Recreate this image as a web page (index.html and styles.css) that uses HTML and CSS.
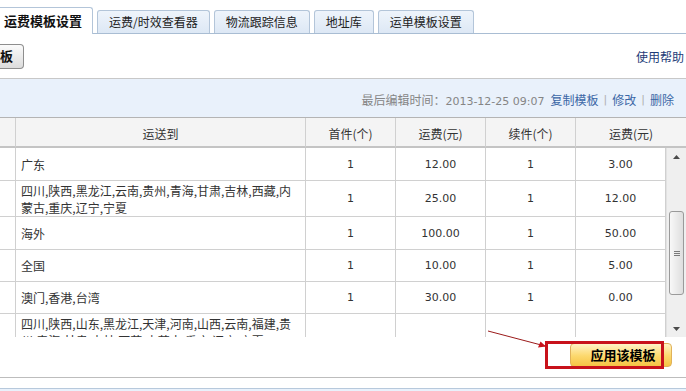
FILE: index.html
```html
<!DOCTYPE html>
<html lang="zh-CN">
<head>
<meta charset="utf-8">
<title>运费模板设置</title>
<link rel="stylesheet" href="styles.css">
</head>
<body>
<div class="page">
  <ul class="tabs">
    <li class="tab active">运费模板设置</li>
    <li class="tab">运费/时效查看器</li>
    <li class="tab">物流跟踪信息</li>
    <li class="tab">地址库</li>
    <li class="tab">运单模板设置</li>
  </ul>

  <div class="toolbar">
    <button class="btn-cut">板</button>
    <a class="help">使用帮助</a>
  </div>

  <div class="panel">
    <div class="panel-head">
      <span class="meta">最后编辑时间：<span class="num">2013-12-25 09:07</span></span>
      <a class="link">复制模板</a><span class="sep">|</span><a class="link">修改</a><span class="sep">|</span><a class="link">删除</a>
    </div>

    <table class="grid-head">
      <colgroup>
        <col class="c-idx"><col class="c-dest"><col class="c-n"><col class="c-n"><col class="c-n"><col class="c-last">
      </colgroup>
      <tr>
        <th></th><th>运送到</th><th>首件(个)</th><th>运费(元)</th><th>续件(个)</th><th>运费(元)</th>
      </tr>
    </table>

    <div class="grid-body">
      <div class="scroll-view">
        <table class="grid">
          <colgroup>
            <col class="c-idx"><col class="c-dest"><col class="c-n"><col class="c-n"><col class="c-n"><col class="c-n2">
          </colgroup>
          <tr class="r33">
            <td></td><td class="dest">广东</td><td class="num">1</td><td class="num">12.00</td><td class="num">1</td><td class="num">3.00</td>
          </tr>
          <tr class="r36">
            <td></td><td class="dest">四川,陕西,黑龙江,云南,贵州,青海,甘肃,吉林,西藏,内<br>蒙古,重庆,辽宁,宁夏</td><td class="num">1</td><td class="num">25.00</td><td class="num">1</td><td class="num">12.00</td>
          </tr>
          <tr class="r33">
            <td></td><td class="dest">海外</td><td class="num">1</td><td class="num">100.00</td><td class="num">1</td><td class="num">50.00</td>
          </tr>
          <tr class="r32">
            <td></td><td class="dest">全国</td><td class="num">1</td><td class="num">10.00</td><td class="num">1</td><td class="num">5.00</td>
          </tr>
          <tr class="r32">
            <td></td><td class="dest">澳门,香港,台湾</td><td class="num">1</td><td class="num">30.00</td><td class="num">1</td><td class="num">0.00</td>
          </tr>
          <tr class="r36 top">
            <td></td><td class="dest">四川,陕西,山东,黑龙江,天津,河南,山西,云南,福建,贵<br>州,青海,甘肃,吉林,西藏,内蒙古,重庆,辽宁,宁夏</td><td class="num"></td><td class="num"></td><td class="num"></td><td class="num"></td>
          </tr>
        </table>
      </div>
      <div class="scrollbar">
        <div class="sb-btn">
          <svg width="7" height="4" viewBox="0 0 7 4"><path d="M0 4 L3.5 0 L7 4 Z" fill="#4a4a4a"/></svg>
        </div>
        <div class="sb-track">
          <div class="sb-thumb">
            <svg width="6" height="5" viewBox="0 0 6 5"><path d="M0 0.5 H6 M0 2.5 H6 M0 4.5 H6" stroke="#7a7a7a" stroke-width="1"/></svg>
          </div>
        </div>
        <div class="sb-btn">
          <svg width="7" height="4" viewBox="0 0 7 4"><path d="M0 0 L3.5 4 L7 0 Z" fill="#4a4a4a"/></svg>
        </div>
      </div>
    </div>

    <div class="panel-foot">
      <button class="apply">应用该模板</button>
    </div>
  </div>

  <div class="next-panel"></div>

  <div class="annot-box"></div>
  <svg class="annot-arrow" width="70" height="30" viewBox="0 0 70 30">
    <line x1="3" y1="6" x2="60" y2="21" stroke="#9b1b1b" stroke-width="1"/>
    <path d="M61 21.5 L53 22.5 L55.5 16.5 Z" fill="#c8121b"/>
  </svg>
</div>
</body>
</html>
```

FILE: styles.css
```css
* {
  box-sizing: border-box;
  margin: 0;
  padding: 0;
}

html,
body {
  width: 686px;
  height: 391px;
  overflow: hidden;
  background: #fff;
}

body {
  font-family: "Noto Sans CJK SC", "DejaVu Sans", sans-serif;
  font-size: 12px;
  color: #333;
}

.page {
  position: relative;
  width: 686px;
}

/* Tabs */
.tabs {
  list-style: none;
  display: flex;
  align-items: flex-end;
  gap: 4px;
  height: 34px;
  border-bottom: 1px solid #a9bdd3;
}

.tab {
  height: 23px;
  line-height: 21px;
  padding: 0 11px;
  border: 1px solid #b3c5d9;
  border-bottom: none;
  border-radius: 3px 3px 0 0;
  background: linear-gradient(#eef4fb, #dde8f5);
  color: #222;
  white-space: nowrap;
}

.tab.active {
  height: 27px;
  line-height: 26px;
  margin-bottom: -1px;
  padding: 0 10px 0 4px;
  border-left: none;
  border-radius: 0 3px 0 0;
  background: #fff;
  font-size: 13px;
  font-weight: bold;
  color: #111;
}

/* Toolbar */
.toolbar {
  display: flex;
  justify-content: space-between;
  align-items: center;
  height: 44px;
  padding-right: 2px;
}

.btn-cut {
  width: 24px;
  height: 25px;
  border: 1px solid #8e8e8e;
  border-left: none;
  border-radius: 0 4px 4px 0;
  background: linear-gradient(#fbfbfb, #dcdcdc);
  font-family: "Noto Sans CJK SC", sans-serif;
  font-size: 13px;
  font-weight: bold;
  color: #111;
  text-align: left;
  line-height: 22px;
}

.help {
  color: #1e3c78;
  font-size: 12px;
}

/* Panel */
.panel {
  border-top: 1px solid #c8c8c8;
}

.panel-head {
  display: flex;
  justify-content: flex-end;
  align-items: center;
  height: 38px;
  padding: 3px 12px 0 0;
  background: #e9f1fb;
}

.meta {
  color: #858585;
  margin-right: 6px;
}

.num {
  font-family: "DejaVu Sans", sans-serif;
  font-size: 11px;
}

.link {
  color: #3b67a6;
}

.sep {
  color: #b0b0b0;
  margin: 0 5px;
  font-family: "DejaVu Sans", sans-serif;
  font-size: 11px;
}

/* Grid */
.c-idx { width: 15px; }
.c-dest { width: 290px; }
.c-n { width: 90px; }
.c-n2 { width: 91px; }
.c-last { width: 111px; }

.grid-head {
  width: 686px;
  table-layout: fixed;
  border-collapse: separate;
  border-spacing: 0;
  border-top: 1px solid #b4b4b4;
  background: #f4f4f4;
}

.grid-head th {
  height: 30px;
  padding-top: 3px;
  font-weight: normal;
  color: #333;
  text-align: center;
  border-left: 1px solid #d0d0d0;
  border-bottom: 2px solid #c4c4c4;
}

.grid-head th:first-child {
  border-left: none;
}

.grid-body {
  display: flex;
  height: 189px;
  overflow: hidden;
}

.scroll-view {
  width: 666px;
  height: 189px;
  overflow: hidden;
}

.grid {
  width: 666px;
  table-layout: fixed;
  border-collapse: separate;
  border-spacing: 0;
}

.grid td {
  border-left: 1px solid #d0d0d0;
  border-bottom: 1px solid #d0d0d0;
  padding: 0 5px;
  vertical-align: middle;
  color: #333;
}

.grid td:first-child {
  border-left: none;
}

.grid td:last-child {
  border-right: 1px solid #d0d0d0;
}

.grid .r33 td { height: 33px; }
.grid .r36 td { height: 36px; }
.grid .r32 td { height: 32px; }

.grid .top td {
  vertical-align: top;
  padding-top: 1px;
}

.grid td.dest {
  text-align: left;
  line-height: 17px;
  white-space: nowrap;
}

.grid td.num {
  text-align: center;
}

/* Scrollbar */
.scrollbar {
  display: flex;
  flex-direction: column;
  width: 20px;
  height: 189px;
  background: #efefef;
  border-left: 1px solid #e2e2e2;
}

.sb-btn {
  display: flex;
  align-items: center;
  justify-content: center;
  height: 17px;
}

.sb-track {
  flex: 1;
}

.sb-thumb {
  display: flex;
  align-items: center;
  justify-content: center;
  height: 84px;
  margin: 46px 2px 0 2px;
  border: 1px solid #9a9a9a;
  border-radius: 3px;
  background: linear-gradient(to right, #f8f8f8, #dedede);
}

/* Footer */
.panel-foot {
  display: flex;
  justify-content: flex-end;
  align-items: flex-start;
  height: 41px;
  padding: 6px 14px 0 0;
  border-bottom: 1px solid #bdbdbd;
}

.apply {
  width: 102px;
  height: 24px;
  padding-left: 4px;
  border: 1px solid #e0b25a;
  border-radius: 4px;
  background: linear-gradient(#fff3c6, #fcd86c 55%, #f5c445);
  font-family: "Noto Sans CJK SC", sans-serif;
  font-size: 13px;
  font-weight: bold;
  color: #000;
  line-height: 20px;
}

.next-panel {
  height: 10px;
  margin-top: 10px;
  border-top: 1px solid #b7c9dc;
  background: #e9f1fb;
}

/* Annotation overlay */
.annot-box {
  position: absolute;
  left: 545px;
  top: 341px;
  width: 119px;
  height: 28px;
  border: 3px solid #c8121b;
}

.annot-arrow {
  position: absolute;
  left: 485px;
  top: 325px;
}
```
